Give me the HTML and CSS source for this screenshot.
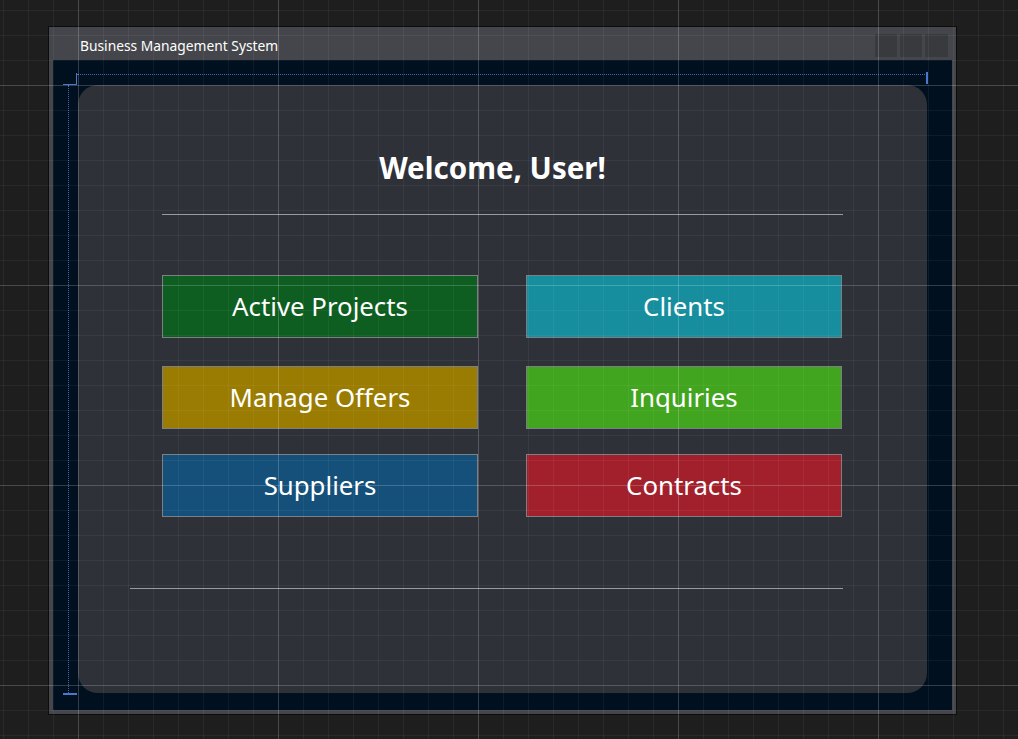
FILE: index.html
```html
<!DOCTYPE html>
<html lang="en">
<head>
<meta charset="utf-8">
<title>Business Management System</title>
<link rel="stylesheet" href="styles.css">
</head>
<body>
<div class="stage">
  <div class="window">
    <div class="titlebar">
      <span class="title">Business Management System</span>
      <div class="caption-buttons">
        <span class="cap-btn"></span>
        <span class="cap-btn"></span>
        <span class="cap-btn wide"></span>
      </div>
    </div>
    <div class="client">
      <div class="ruler-h"></div>
      <div class="ruler-h-start"></div>
      <div class="ruler-h-end"></div>
      <div class="ruler-corner"></div>
      <div class="ruler-v"></div>
      <div class="ruler-v-end"></div>
      <div class="card">
        <h1 class="welcome">Welcome, User!</h1>
        <hr class="divider top">
        <div class="tiles">
          <div class="tile green">Active Projects</div>
          <div class="tile teal">Clients</div>
          <div class="tile gold">Manage Offers</div>
          <div class="tile lime">Inquiries</div>
          <div class="tile blue">Suppliers</div>
          <div class="tile red">Contracts</div>
        </div>
        <hr class="divider bottom">
      </div>
    </div>
  </div>
</div>
<div class="grid-overlay"></div>
</body>
</html>
```
FILE: styles.css
```css
html, body {
  margin: 0;
  padding: 0;
  height: 100%;
}
body {
  background: #1e1e1e;
  font-family: "Noto Sans", "Open Sans", sans-serif;
  overflow: hidden;
}
.stage {
  padding: 26px 0 0 48px;
}
.window {
  border: 1px solid #0c0c0c;
  background: #45464b;
  display: flex;
  flex-direction: column;
  padding: 0 4px 4px 4px;
  box-sizing: content-box;
  width: 899px;
  height: 683px;
}
.titlebar {
  height: 33px;
  display: flex;
  align-items: center;
  justify-content: space-between;
  flex-shrink: 0;
}
.title {
  color: #ffffff;
  font-size: 13.8px;
  margin-left: 27px;
  margin-top: 3px;
}
.caption-buttons {
  display: flex;
  gap: 3px;
  margin-right: 4px;
  margin-top: 7px;
  align-self: flex-start;
}
.cap-btn {
  width: 22px;
  height: 23px;
  background: #393a3e;
}
.cap-btn.wide {
  width: 23px;
}
.client {
  flex: 1;
  background: #01101f;
  position: relative;
  padding: 25px 25px 17px 25px;
  display: flex;
}
.ruler-h {
  position: absolute;
  left: 24px;
  top: 14px;
  width: 850px;
  height: 0;
  border-top: 1px dotted #3f68b0;
}
.ruler-h-start {
  position: absolute;
  left: 23px;
  top: 13px;
  width: 1px;
  height: 12px;
  background: #4a78d0;
}
.ruler-h-end {
  position: absolute;
  left: 873px;
  top: 12px;
  width: 2px;
  height: 12px;
  background: #4a78d0;
}
.ruler-corner {
  position: absolute;
  left: 10px;
  top: 24px;
  width: 14px;
  height: 1px;
  background: #4a78d0;
}
.ruler-v {
  position: absolute;
  left: 15px;
  top: 25px;
  width: 0;
  height: 608px;
  border-left: 1px dotted #3f68b0;
}
.ruler-v-end {
  position: absolute;
  left: 10px;
  top: 633px;
  width: 14px;
  height: 2px;
  background: #4a78d0;
}
.card {
  flex: 1;
  background: #2f3139;
  border-radius: 20px;
  padding: 0 84px 0 84px;
  display: flex;
  flex-direction: column;
}
.welcome {
  margin: 64px 20px 0 0;
  text-align: center;
  color: #ffffff;
  font-size: 29.5px;
  font-weight: 700;
  line-height: 38px;
}
.divider {
  border: 0;
  height: 1px;
  background: #9a9a9a;
  margin: 0;
}
.divider.top {
  margin-top: 27px;
}
.tiles {
  display: grid;
  grid-template-columns: 316px 316px;
  column-gap: 48px;
  grid-template-rows: 63px 91px 88px;
  margin-top: 60px;
}
.tiles .tile:nth-child(3), .tiles .tile:nth-child(4) {
  margin-top: 28px;
}
.tiles .tile:nth-child(5), .tiles .tile:nth-child(6) {
  margin-top: 25px;
}
.tile {
  height: 63px;
  box-sizing: border-box;
  border: 1px solid #7d7f84;
  color: #ffffff;
  font-size: 25.8px;
  display: flex;
  align-items: center;
  justify-content: center;
  padding-bottom: 2px;
}
.green { background: #0d5e20; }
.teal { background: #178e9e; }
.gold { background: #9a7c02; }
.lime { background: #42a51f; }
.blue { background: #14507a; }
.red { background: #a2202c; }
.divider.bottom {
  margin-top: 71px;
  margin-left: -32px;
}
.grid-overlay {
  position: fixed;
  inset: 0;
  pointer-events: none;
  background-image:
    linear-gradient(to right, rgba(255,255,255,0.15) 1px, transparent 1px),
    linear-gradient(to bottom, rgba(255,255,255,0.15) 1px, transparent 1px),
    linear-gradient(to right, rgba(255,255,255,0.05) 1px, transparent 1px),
    linear-gradient(to bottom, rgba(255,255,255,0.05) 1px, transparent 1px);
  background-size: 200px 200px, 200px 200px, 25px 25px, 25px 25px;
  background-position: 78px 0, 0 85px, 3px 0, 0 10px;
}
```
